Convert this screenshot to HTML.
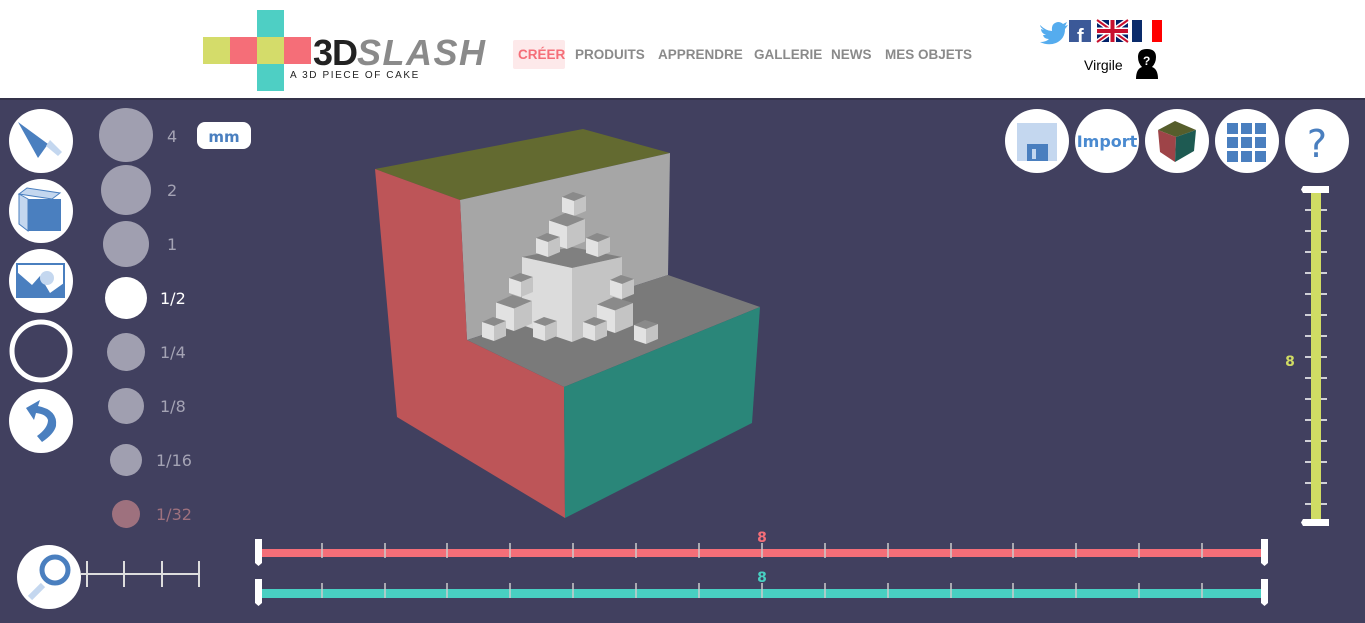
<!DOCTYPE html>
<html><head><meta charset="utf-8"><style>
body{margin:0;width:1365px;height:623px;overflow:hidden;background:#41405f;font-family:"Liberation Sans",sans-serif;position:relative}
#hdr{position:absolute;left:0;top:0;width:1365px;height:98px;background:#fff;border-bottom:2px solid #34334a}
.nav{position:absolute;top:47px;font-size:13.5px;color:#8a8a8a;font-weight:bold}
.lbl{position:absolute;font-size:16px;color:#a4a3b4;font-family:"DejaVu Sans",sans-serif}
</style></head><body>
<div id="hdr">
 <div style="position:absolute;left:203px;top:37px;width:27px;height:27px;background:#d4dc6a"></div>
 <div style="position:absolute;left:230px;top:37px;width:27px;height:27px;background:#f56e78"></div>
 <div style="position:absolute;left:257px;top:37px;width:27px;height:27px;background:#d4dc6a"></div>
 <div style="position:absolute;left:284px;top:37px;width:27px;height:27px;background:#f56e78"></div>
 <div style="position:absolute;left:257px;top:10px;width:27px;height:27px;background:#4ecfc4"></div>
 <div style="position:absolute;left:257px;top:64px;width:27px;height:27px;background:#4ecfc4"></div>
 <div style="position:absolute;left:313px;top:32px;font-size:36px;font-weight:bold;color:#222;letter-spacing:-1px">3D<span style="color:#8a8a8a;font-style:italic;letter-spacing:1.5px">SLASH</span></div>
 <div style="position:absolute;left:290px;top:70px;font-size:10px;letter-spacing:1.6px;color:#222">A 3D PIECE OF CAKE</div>
 <div style="position:absolute;left:513px;top:40px;width:52px;height:29px;background:#fde9ea;border-radius:2px"></div>
 <div class="nav" style="left:518px;color:#f56e78">CRÉER</div>
 <div class="nav" style="left:575px">PRODUITS</div>
 <div class="nav" style="left:658px">APPRENDRE</div>
 <div class="nav" style="left:754px">GALLERIE</div>
 <div class="nav" style="left:831px">NEWS</div>
 <div class="nav" style="left:885px">MES OBJETS</div>
 <svg style="position:absolute;left:1038px;top:19px" width="130" height="64">
  <path d="M2 6 Q8 12 14 12 Q13 4 20 3 Q23 3 25 5 L29 3 L27 7 L30 6 Q28 9 27 10 Q27 20 18 24 Q10 27 2 23 Q8 23 11 20 Q6 20 5 16 L8 16 Q3 14 3 10 L6 11 Q2 8 2 6Z" fill="#55acee"/>
  <rect x="31" y="1" width="22" height="22" fill="#3b5998"/><text x="39" y="24" font-size="20" font-weight="bold" fill="#fff" font-family="Liberation Sans">f</text>
  <rect x="59" y="1" width="31" height="22" fill="#012169"/>
  <path d="M59 1L90 23M90 1L59 23" stroke="#fff" stroke-width="5"/><path d="M59 1L90 23M90 1L59 23" stroke="#c8102e" stroke-width="2"/>
  <path d="M74.5 1V23M59 12H90" stroke="#fff" stroke-width="7"/><path d="M74.5 1V23M59 12H90" stroke="#c8102e" stroke-width="4"/>
  <rect x="94" y="1" width="10" height="22" fill="#0a2b6b"/><rect x="104" y="1" width="10" height="22" fill="#fff"/><rect x="114" y="1" width="10" height="22" fill="#f00"/>
  <path d="M98 60 Q98 50 104 48 Q100 44 100 38 Q100 30 109 30 Q118 30 118 38 Q118 44 114 48 Q120 50 120 60Z" fill="#000"/>
  <text x="105" y="46" font-size="12" font-weight="bold" fill="#fff" font-family="Liberation Sans">?</text>
 </svg>
 <div style="position:absolute;left:1084px;top:57px;font-size:14px;color:#000">Virgile</div>
</div>

<svg style="position:absolute;left:0;top:100px" width="1365" height="523">
 <defs>
  <g id="cb"><polygon points="0,5 11,0 24,4 12,9" fill="#8a8a8a"/><polygon points="0,5 12,9 12,24 0,20" fill="#e2e2e2"/><polygon points="12,9 24,4 24,19 12,24" fill="#c4c4c4"/></g>
 </defs>
 <circle cx="41" cy="41" r="32" fill="#fff"/>
 <path d="M18 22 L48 44 L38 58Z" fill="#4a7fbf"/><path d="M50 40 L62 52 L58 56 L46 46Z" fill="#c4d7ef"/>
 <circle cx="41" cy="111" r="32" fill="#fff"/>
 <polygon points="19,94 27,88 60,93 52,99" fill="#c4d7ef" stroke="#4a7fbf"/><polygon points="19,94 28,99 28,131 19,124" fill="#c4d7ef" stroke="#4a7fbf"/><rect x="28" y="99" width="33" height="32" fill="#4a7fbf"/>
 <circle cx="41" cy="181" r="32" fill="#fff"/>
 <rect x="17" y="164" width="47" height="33" fill="#fff" stroke="#4a7fbf" stroke-width="2"/><path d="M17 197 V172 L32 185 L40 176 L50 193 L64 183 V197Z" fill="#4a7fbf"/><circle cx="47" cy="178" r="7" fill="#c4d7ef"/>
 <circle cx="41" cy="251" r="29" fill="none" stroke="#fff" stroke-width="5"/>
 <circle cx="41" cy="321" r="32" fill="#fff"/>
 <path d="M26 308 L40 300 L38 306 Q58 310 56 326 Q54 334 42 342 L37 336 Q48 328 48 320 Q46 314 36 313 L34 320Z" fill="#4a7fbf"/>
 <circle cx="49" cy="477" r="32" fill="#fff"/>
 <line x1="30" y1="498" x2="43" y2="485" stroke="#c4d7ef" stroke-width="6"/><circle cx="55" cy="470" r="13" fill="none" stroke="#4a7fbf" stroke-width="5"/>
 <path d="M81 474 H199 M87 461V487 M124 461V487 M162 461V487 M199 461V487" stroke="#ddd" stroke-width="2"/>
 <circle cx="126" cy="35" r="27" fill="#a09fb0"/><circle cx="126" cy="90" r="25" fill="#a09fb0"/><circle cx="126" cy="144" r="23" fill="#a09fb0"/>
 <circle cx="126" cy="198" r="21" fill="#fff"/><circle cx="126" cy="252" r="19" fill="#a09fb0"/><circle cx="126" cy="306" r="18" fill="#a09fb0"/>
 <circle cx="126" cy="360" r="16" fill="#a09fb0"/><circle cx="126" cy="414" r="14" fill="#9e717e"/>
 <rect x="197" y="22" width="54" height="27" rx="8" fill="#fff"/>
 <text x="224" y="42" text-anchor="middle" font-size="15" font-weight="bold" fill="#4a7fbf" font-family="DejaVu Sans">mm</text>
 <!-- 3D object -->
 <polygon points="375,69 583,29 670,53 460,100" fill="#636a30"/>
 <polygon points="460,100 670,53 668,175 467,240" fill="#a6a6a6"/>
 <polygon points="467,240 668,175 760,207 564,287" fill="#7a7a7a"/>
 <polygon points="375,69 460,100 467,240 564,287 565,418 397,317" fill="#bd5558"/>
 <polygon points="564,287 760,207 752,323 565,418" fill="#2a8679"/>
 <polygon points="522,157 572,147 622,157 572,168" fill="#808080"/>
 <polygon points="522,157 572,168 572,242 522,225" fill="#dcdcdc"/>
 <polygon points="572,168 622,157 622,222 572,242" fill="#c4c4c4"/>
 <use href="#cb" x="562" y="92"/>
 <use href="#cb" transform="translate(549,113) scale(1.5)"/>
 <use href="#cb" x="536" y="133"/><use href="#cb" x="586" y="133"/>
 <use href="#cb" x="509" y="173"/><use href="#cb" x="610" y="175"/>
 <use href="#cb" transform="translate(496,195) scale(1.5)"/><use href="#cb" transform="translate(597,197) scale(1.5)"/>
 <use href="#cb" x="482" y="217"/><use href="#cb" x="533" y="217"/><use href="#cb" x="583" y="217"/><use href="#cb" x="634" y="220"/>
 <!-- right buttons -->
 <circle cx="1037" cy="41" r="32" fill="#fff"/><rect x="1017" y="23" width="40" height="38" fill="#c4d7ef"/><rect x="1027" y="44" width="21" height="17" fill="#4a7fbf"/><rect x="1032" y="49" width="4" height="10" fill="#c4d7ef"/>
 <circle cx="1107" cy="41" r="32" fill="#fff"/><text x="1107" y="47" text-anchor="middle" font-size="16" font-weight="bold" fill="#4a8ad0" font-family="DejaVu Sans">Import</text>
 <circle cx="1177" cy="41" r="32" fill="#fff"/><polygon points="1158,30 1175,21 1196,30 1176,37" fill="#565e2c"/><polygon points="1158,30 1176,37 1175,62 1160,52" fill="#9e4448"/><polygon points="1176,37 1196,30 1194,51 1175,62" fill="#1e5a52"/>
 <circle cx="1247" cy="41" r="32" fill="#fff"/>
 <g fill="#4a7fbf"><rect x="1227" y="23" width="11" height="11"/><rect x="1241" y="23" width="11" height="11"/><rect x="1255" y="23" width="11" height="11"/><rect x="1227" y="37" width="11" height="11"/><rect x="1241" y="37" width="11" height="11"/><rect x="1255" y="37" width="11" height="11"/><rect x="1227" y="51" width="11" height="11"/><rect x="1241" y="51" width="11" height="11"/><rect x="1255" y="51" width="11" height="11"/></g>
 <circle cx="1317" cy="41" r="32" fill="#fff"/><text x="1317" y="57" text-anchor="middle" font-size="38" fill="#4a7fbf" font-family="DejaVu Sans">?</text>
 <rect x="1311" y="90" width="10" height="334" fill="#d0dc64"/>
 <g stroke="#fff" stroke-width="1.5"><path d="M1305 110h6m10 0h6M1305 131h6m10 0h6M1305 152h6m10 0h6M1305 173h6m10 0h6M1305 194h6m10 0h6M1305 215h6m10 0h6M1305 236h6m10 0h6M1305 257h6m10 0h6M1305 278h6m10 0h6M1305 299h6m10 0h6M1305 320h6m10 0h6M1305 341h6m10 0h6M1305 362h6m10 0h6M1305 383h6m10 0h6M1305 404h6m10 0h6"/></g>
 <path d="M1303 86 H1329 V93 H1303 L1301 89.5Z M1303 419 H1329 V426 H1303 L1301 422.5Z" fill="#fff"/>
 <text x="1290" y="266" text-anchor="middle" font-size="14" font-weight="bold" fill="#d0dc64" font-family="DejaVu Sans">8</text>
 <rect x="262" y="449" width="1002" height="8" fill="#f56e78"/>
 <rect x="262" y="489" width="1002" height="9" fill="#48d0c2"/>
 <g stroke="#ccc" stroke-width="1.5">
  <path d="M322 443v15M385 443v15M447 443v15M510 443v15M573 443v15M636 443v15M699 443v15M762 443v15M825 443v15M888 443v15M951 443v15M1013 443v15M1076 443v15M1139 443v15M1202 443v15"/>
  <path d="M322 483v15M385 483v15M447 483v15M510 483v15M573 483v15M636 483v15M699 483v15M762 483v15M825 483v15M888 483v15M951 483v15M1013 483v15M1076 483v15M1139 483v15M1202 483v15"/>
 </g>
 <path d="M255 439h7v24l-3.5 3l-3.5-3Z M255 479h7v24l-3.5 3l-3.5-3Z M1261 439h7v24l-3.5 3l-3.5-3Z M1261 479h7v24l-3.5 3l-3.5-3Z" fill="#fff"/>
 <text x="762" y="442" text-anchor="middle" font-size="14" font-weight="bold" fill="#f56e78" font-family="DejaVu Sans">8</text>
 <text x="762" y="482" text-anchor="middle" font-size="14" font-weight="bold" fill="#48d0c2" font-family="DejaVu Sans">8</text>
</svg>
<div class="lbl" style="left:167px;top:127px">4</div>
<div class="lbl" style="left:167px;top:181px">2</div>
<div class="lbl" style="left:167px;top:235px">1</div>
<div class="lbl" style="left:160px;top:289px;color:#fff">1/2</div>
<div class="lbl" style="left:160px;top:343px">1/4</div>
<div class="lbl" style="left:160px;top:397px">1/8</div>
<div class="lbl" style="left:156px;top:451px">1/16</div>
<div class="lbl" style="left:156px;top:505px;color:#9e717e">1/32</div>
</body></html>
